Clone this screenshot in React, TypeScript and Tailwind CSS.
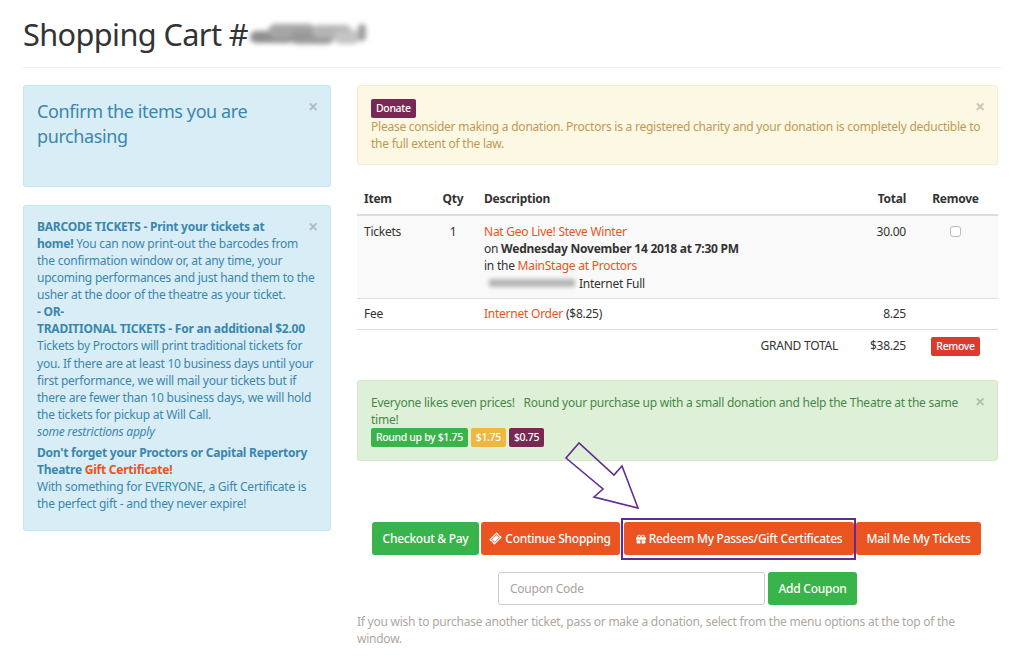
import React from 'react';
import { FaGift, FaTicketAlt } from 'react-icons/fa';

const Close = () => (
  <span className="absolute right-[12px] top-[13px] text-[18px] leading-[14px] font-bold text-black opacity-20">×</span>
);

const Link = ({ children }: { children: React.ReactNode }) => <a className="text-[#e95420]">{children}</a>;

const Button = ({ color, children }: { color: string; children: React.ReactNode }) => (
  <span className={`inline-flex items-center justify-center h-[33px] rounded-[3px] text-white text-[12px] tracking-[-0.27px] font-medium ${color}`}>
    {children}
  </span>
);

const Label = ({ color, children }: { color: string; children: React.ReactNode }) => (
  <span className={`inline-block h-[19px] px-[5px] rounded-[2px] text-white text-[10.5px] tracking-[-0.35px] leading-[19px] font-medium ${color}`}>
    {children}
  </span>
);

// redacted order number
const HeadingSmudge = () => (
  <span className="relative inline-block w-[118px] h-[24px] ml-[2px] blur-[2.5px]">
    <span className="absolute left-0 top-[9px] w-[44px] h-[12px] rounded-full bg-[#8f8f8f]" />
    <span className="absolute left-[18px] top-[2px] w-[48px] h-[15px] rounded-full bg-[#a6a6a6]" />
    <span className="absolute left-[40px] top-[9px] w-[44px] h-[13px] rounded-full bg-[#999999]" />
    <span className="absolute left-[62px] top-[3px] w-[40px] h-[13px] rounded-full bg-[#b5b5b5]" />
    <span className="absolute left-[84px] top-[8px] w-[26px] h-[14px] rounded-full bg-[#c4c4c4]" />
    <span className="absolute left-[108px] top-[2px] w-[8px] h-[17px] rounded-full bg-[#a0a0a0]" />
  </span>
);

export default function App() {
  return (
    <div className="w-[1024px] h-[661px] overflow-hidden bg-white px-[23px] pt-[16px] text-[12px] leading-[17.07px] tracking-[-0.24px] text-[#333333] font-['Noto_Sans',sans-serif]">
      <div className="flex items-center h-[36px] text-[30.7px] tracking-[-0.6px] leading-[36px]">
        <span>Shopping Cart #</span>
        <HeadingSmudge />
      </div>
      <div className="mt-[15px] border-t border-[#eeeeee]" />

      <div className="flex mt-[17px] gap-[26px]">
        <div className="w-[308px] flex flex-col gap-[18px]">
          <div className="relative h-[102px] rounded-[3px] border border-[#bce8f1] bg-[#d9edf7] pl-[13px] pr-[40px] pt-[13px] text-[18px] tracking-[-0.4px] leading-[25px] text-[#3a87ad]">
            <Close />
            Confirm the items you are purchasing
          </div>

          <div className="relative h-[326px] rounded-[3px] border border-[#bce8f1] bg-[#d9edf7] pl-[13px] pr-[12px] pt-[12px] text-[#3a87ad]">
            <Close />
            <p>
              <b>BARCODE TICKETS - Print your tickets at<br />home!</b> You can now print-out the barcodes from the confirmation window or, at any time, your upcoming performances and just hand them to the usher at the door of the theatre as your ticket.
            </p>
            <p><b>- OR-</b></p>
            <p><b>TRADITIONAL TICKETS - For an additional $2.00</b></p>
            <p>
              Tickets by Proctors will print traditional tickets for you. If there are at least 10 business days until your first performance, we will mail your tickets but if there are fewer than 10 business days, we will hold the tickets for pickup at Will Call.
            </p>
            <p className="italic">some restrictions apply</p>
            <p className="mt-[4px]">
              <b>Don't forget your Proctors or Capital Repertory Theatre <span className="text-[#e95420]">Gift Certificate!</span></b>
            </p>
            <p>With something for EVERYONE, a Gift Certificate is the perfect gift - and they never expire!</p>
          </div>
        </div>

        <div className="relative w-[641px]">
          <div className="relative h-[80px] rounded-[3px] border border-[#faebcc] bg-[#fcf8e3] pl-[13px] pr-[13px] pt-[13px] text-[#c09853]">
            <Close />
            <Label color="bg-[#772953]">Donate</Label>
            <div>Please consider making a donation. Proctors is a registered charity and your donation is completely deductible to the full extent of the law.</div>
          </div>

          <table className="w-full mt-[18px] border-collapse">
            <thead>
              <tr className="h-[32px] border-b-2 border-[#dddddd] font-bold">
                <th className="w-[77px] pl-[7px] text-left">Item</th>
                <th className="w-[42px] text-center font-bold pr-[4px]">Qty</th>
                <th className="pl-[8px] text-left">Description</th>
                <th className="w-[68px] pr-[7px] text-right">Total</th>
                <th className="w-[85px] text-center">Remove</th>
              </tr>
            </thead>
            <tbody>
              <tr className="h-[83px] bg-[#f9f9f9] border-b border-[#dddddd] align-top">
                <td className="pl-[7px] pt-[7px]">Tickets</td>
                <td className="pt-[7px] text-center pr-[4px]">1</td>
                <td className="pl-[8px] pt-[7px]">
                  <Link>Nat Geo Live! Steve Winter</Link>
                  <br />on <b>Wednesday November 14 2018 at 7:30 PM</b>
                  <br />in the <Link>MainStage at Proctors</Link>
                  <br />
                  <span className="inline-flex items-center">
                    <span className="inline-block w-[86px] h-[8px] ml-[5px] mr-[4px] bg-[#8a8a8a] opacity-60 blur-[2px]" />
                    Internet Full
                  </span>
                </td>
                <td className="pt-[7px] pr-[7px] text-right">30.00</td>
                <td className="pt-[8px] text-center">
                  <input type="checkbox" readOnly className="appearance-none w-[11px] h-[11px] border border-[#bbbbbb] rounded-[3px] bg-white" />
                </td>
              </tr>
              <tr className="h-[31px] border-b border-[#dddddd]">
                <td className="pl-[7px]">Fee</td>
                <td />
                <td className="pl-[8px]"><Link>Internet Order</Link> ($8.25)</td>
                <td className="pr-[7px] text-right">8.25</td>
                <td />
              </tr>
              <tr className="h-[32px]">
                <td colSpan={3} className="pr-[7px] text-right">GRAND TOTAL</td>
                <td className="pr-[7px] text-right">$38.25</td>
                <td className="text-center pt-[2px]">
                  <Label color="bg-[#df382c]">Remove</Label>
                </td>
              </tr>
            </tbody>
          </table>

          <div className="relative h-[81px] mt-[19px] rounded-[3px] border border-[#d6e9c6] bg-[#dff0d8] pl-[13px] pr-[30px] pt-[13px] text-[#468847]">
            <Close />
            <div>Everyone likes even prices! &nbsp; Round your purchase up with a small donation and help the Theatre at the same time!</div>
            <div className="flex gap-[3px]">
              <Label color="bg-[#38b44a]">Round up by $1.75</Label>
              <Label color="bg-[#efb73e]">$1.75</Label>
              <Label color="bg-[#772953]">$0.75</Label>
            </div>
          </div>

          <svg className="absolute left-[203px] top-[353px] w-[85px] h-[75px]" viewBox="0 0 85 75" fill="none">
            <path d="M19 5 L6 20 L43 51 L34 59 L78 70 L62 28 L54 37 Z" stroke="#5f2d91" strokeWidth="1.6" />
          </svg>

          <div className="flex gap-[2px] mt-[61px] ml-[15px]">
            <Button color="bg-[#38b44a] w-[107px]">Checkout &amp; Pay</Button>
            <Button color="bg-[#e95420] w-[139px]">
              <FaTicketAlt className="w-[11px] h-[11px] mr-[4px] -rotate-45" />Continue Shopping
            </Button>
            <span className="relative ml-[2px]">
              <Button color="bg-[#e95420] w-[230px]">
                <FaGift className="w-[10px] h-[10px] mr-[3px]" />Redeem My Passes/Gift Certificates
              </Button>
              <span className="absolute -left-[3px] -right-[2px] -top-[4px] -bottom-[5px] border-2 border-[#5f2d91]" />
            </span>
            <Button color="bg-[#e95420] w-[125px]">Mail Me My Tickets</Button>
          </div>

          <div className="flex gap-[3px] mt-[17px] ml-[141px]">
            <div className="w-[267px] h-[33px] rounded-[3px] border border-[#cccccc] pl-[11px] flex items-center text-[#a8a29e] text-[12px]">Coupon Code</div>
            <Button color="bg-[#38b44a] w-[89px]">Add Coupon</Button>
          </div>

          <p className="mt-[8px] text-[#aea79f]">If you wish to purchase another ticket, pass or make a donation, select from the menu options at the top of the window.</p>
        </div>
      </div>
    </div>
  );
}
